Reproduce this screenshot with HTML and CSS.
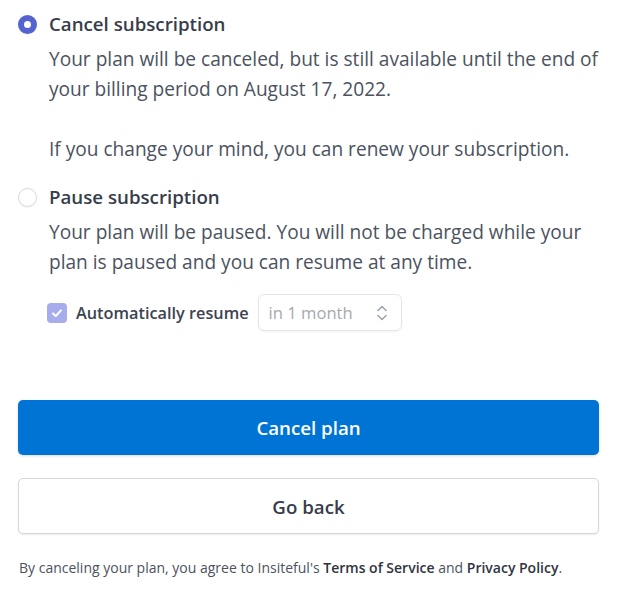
FILE: index.html
```html
<!DOCTYPE html>
<html lang="en">
<head>
<meta charset="UTF-8" />
<meta name="viewport" content="width=device-width, initial-scale=1" />
<title>Cancel Plan</title>
<link rel="stylesheet" href="styles.css">
</head>
<body>
<div class="container">
  <div class="option">
    <span class="radio checked"></span>
    <div class="option-body">
      <h3>Cancel subscription</h3>
      <p>Your plan will be canceled, but is still available until the end of your billing period on August 17, 2022.</p>
      <p class="gap">If you change your mind, you can renew your subscription.</p>
    </div>
  </div>

  <div class="option">
    <span class="radio"></span>
    <div class="option-body">
      <h3>Pause subscription</h3>
      <p>Your plan will be paused. You will not be charged while your plan is paused and you can resume at any time.</p>
      <div class="resume">
        <span class="checkbox">
          <svg width="14" height="14" viewBox="0 0 14 14"><path d="M3 7.4l2.8 2.6 5.2-5.6" fill="none" stroke="#fff" stroke-width="2" stroke-linecap="round" stroke-linejoin="round"/></svg>
        </span>
        <span class="resume-label">Automatically resume</span>
        <div class="select">
          <span>in 1 month</span>
          <svg width="12" height="18" viewBox="0 0 12 18"><path d="M2 6.5l4-4 4 4M2 11.5l4 4 4-4" fill="none" stroke="#9ca3af" stroke-width="1.5" stroke-linecap="round" stroke-linejoin="round"/></svg>
        </div>
      </div>
    </div>
  </div>

  <button class="btn primary">Cancel plan</button>
  <button class="btn secondary">Go back</button>

  <p class="terms">By canceling your plan, you agree to Insiteful's <b>Terms of Service</b> and <b>Privacy Policy</b>.</p>
</div>
</body>
</html>
```

FILE: styles.css
```css
body {
  margin: 0;
  font-family: "Open Sans", "Noto Sans", sans-serif;
  background: #fff;
  color: #4b5260;
}
.container {
  width: 581px;
  margin-left: 18px;
  padding-top: 10px;
}
.option {
  display: flex;
  gap: 12px;
}
.option + .option {
  margin-top: 19px;
}
.radio {
  flex: none;
  width: 19px;
  height: 19px;
  margin-top: 5px;
  border-radius: 50%;
  border: 1px solid #d6d9de;
  box-sizing: border-box;
  box-shadow: 0 1px 1px rgba(0,0,0,0.05);
}
.radio.checked {
  border: 6.5px solid #5563d0;
  background: #fff;
}
.option-body h3 {
  margin: 0 0 6px 0;
  font-size: 18.7px;
  font-weight: 600;
  color: #373d4a;
  line-height: 28px;
}
.option-body p {
  margin: 0;
  font-size: 19.1px;
  line-height: 30px;
}
.option-body p.gap {
  margin-top: 30px;
}
.resume {
  display: flex;
  align-items: center;
  margin-top: 17px;
}
.checkbox {
  width: 20px;
  height: 20px;
  margin-left: -2px;
  border-radius: 4px;
  background: #a7adec;
  display: flex;
  align-items: center;
  justify-content: center;
}
.resume-label {
  margin-left: 9px;
  font-size: 16.3px;
  font-weight: 600;
  color: #3d4350;
}
.select {
  margin-left: 9px;
  width: 144px;
  height: 37px;
  box-sizing: border-box;
  border: 1px solid #e3e5e8;
  border-radius: 6px;
  box-shadow: 0 1px 2px rgba(0,0,0,0.05);
  display: flex;
  align-items: center;
  justify-content: space-between;
  padding: 0 13px 0 10px;
  font-size: 16.6px;
  color: #a5a9b0;
}
.btn {
  display: block;
  width: 100%;
  height: 55px;
  border-radius: 5px;
  font-family: "Open Sans", "Noto Sans", sans-serif;
  font-size: 18.7px;
  font-weight: 600;
  cursor: pointer;
}
.primary {
  margin-top: 69px;
  background: #0074d4;
  color: #fff;
  border: none;
  box-shadow: 0 1px 3px rgba(0,0,0,0.15);
}
.primary:hover {
  background: #0066bb;
}
.secondary {
  margin-top: 23px;
  height: 56px;
  background: #fff;
  color: #373d4a;
  border: 1px solid #d4d7dc;
  box-shadow: 0 1px 2px rgba(0,0,0,0.08);
}
.terms {
  margin: 24px 0 0 1px;
  font-size: 14px;
  color: #4b5260;
}
.terms b {
  font-weight: 600;
  color: #2f3440;
}
```
